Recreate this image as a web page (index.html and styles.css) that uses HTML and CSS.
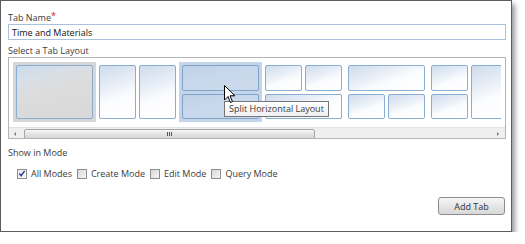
FILE: index.html
```html
<!DOCTYPE html>
<html lang="en">
<head>
    <meta charset="UTF-8">
    <title>Add Tab</title>
    <link rel="stylesheet" href="styles.css">
</head>
<body>
    <div class="dialog">
        <div class="field-label">Tab Name<span class="req">*</span></div>
        <input type="text" class="text-input" value="Time and Materials">

        <div class="field-label layout-label">Select a Tab Layout</div>
        <div class="layout-box">
            <div class="thumbs">
                <div class="option selected">
                    <div class="panel full"></div>
                </div>
                <div class="option cols">
                    <div class="panel"></div>
                    <div class="panel"></div>
                </div>
                <div class="option rows hover">
                    <div class="panel"></div>
                    <div class="panel"></div>
                </div>
                <div class="option grid top-split">
                    <div class="panel"></div>
                    <div class="panel"></div>
                    <div class="panel wide"></div>
                </div>
                <div class="option grid bottom-split">
                    <div class="panel wide"></div>
                    <div class="panel"></div>
                    <div class="panel"></div>
                </div>
                <div class="option grid left-split">
                    <div class="panel"></div>
                    <div class="panel tall"></div>
                    <div class="panel"></div>
                </div>
            </div>
            <div class="scrollbar">
                <span class="arrow left"></span>
                <div class="thumb"><span class="grip"></span></div>
                <span class="arrow right"></span>
            </div>

            <div class="tooltip">Split Horizontal Layout</div>
            <svg class="cursor" width="12" height="19" viewBox="0 0 12 19">
                <path d="M0.5 0.5 L0.5 15 L4 11.5 L6.5 17.5 L8.5 16.6 L6 10.8 L11 10.8 Z" fill="#fff" stroke="#000" stroke-width="1"/>
            </svg>
        </div>

        <div class="field-label mode-label">Show in Mode</div>
        <div class="modes">
            <label class="mode"><span class="box checked">
                <svg width="9" height="9" viewBox="0 0 9 9"><path d="M1.5 4.5 L3.5 7 L7.5 1.5" fill="none" stroke="#2a3f8f" stroke-width="1.6"/></svg>
            </span>All Modes</label>
            <label class="mode"><span class="box"></span>Create Mode</label>
            <label class="mode"><span class="box"></span>Edit Mode</label>
            <label class="mode"><span class="box"></span>Query Mode</label>
        </div>

        <div class="actions">
            <button type="button" class="add-btn">Add Tab</button>
        </div>
    </div>
</body>
</html>
```

FILE: styles.css
```css
body {
    margin: 0;
    background-color: #fff;
    font-family: "Open Sans", "Noto Sans", sans-serif;
    font-size: 9px;
    color: #3c3c3c;
}
.dialog {
    box-sizing: border-box;
    width: 512px;
    height: 232px;
    border: 1px solid #5c5c5c;
    padding: 10px 6px 0 7px;
    background-color: #fff;
    box-shadow: 3px 4px 5px rgba(0, 0, 0, 0.4);
}
.field-label {
    line-height: 13px;
    height: 13px;
}
.req {
    color: #d01010;
    vertical-align: top;
    font-size: 9px;
    line-height: 9px;
}
.text-input {
    display: block;
    box-sizing: border-box;
    width: 498px;
    height: 16px;
    margin: 0;
    padding: 0 3px;
    border: 1px solid #a9c1db;
    font-family: inherit;
    font-size: 9px;
    color: #111;
    outline: none;
}
.layout-label {
    margin-top: 4px;
}
.layout-box {
    position: relative;
    box-sizing: border-box;
    width: 498px;
    height: 82px;
    border: 1px solid #b4b4b4;
    overflow: hidden;
}
.thumbs {
    display: flex;
    padding: 4px 0 0 4px;
    height: 64px;
    box-sizing: border-box;
    width: 492px;
    overflow: hidden;
}
.option {
    flex: none;
    box-sizing: border-box;
    width: 83px;
    height: 60px;
    padding: 3px;
    display: grid;
    gap: 3px;
}
.option.selected {
    background-color: #d6d6d6;
}
.option.hover {
    background-color: #c4d5ea;
}
.option.cols {
    grid-template-columns: 1fr 1fr;
}
.option.rows {
    grid-template-rows: 1fr 1fr;
}
.option.grid {
    grid-template-columns: 1fr 1fr;
    grid-template-rows: 1fr 1fr;
}
.panel {
    border: 1px solid #8aadd2;
    border-radius: 2px;
    background: linear-gradient(160deg, #cfdcec 0%, #e6edf6 35%, #fbfcfe 60%, #fff 100%);
}
.panel.wide {
    grid-column: span 2;
}
.left-split .panel.tall {
    grid-row: span 2;
}
.option.selected .panel {
    background: linear-gradient(165deg, #cbdbec 0%, #d9dfe6 25%, #dcdcdc 45%, #d8d8d8 100%);
}
.option.hover .panel {
    border-color: #7fa3c9;
    background: linear-gradient(165deg, #bfd1e8 0%, #c8d7eb 40%, #ccdaec 100%);
}
.scrollbar {
    position: relative;
    display: flex;
    align-items: center;
    height: 11px;
    margin-top: 5px;
    background-color: #efefef;
    border-top: 1px solid #e2e2e2;
}
.arrow {
    width: 0;
    height: 0;
    border-top: 2px solid transparent;
    border-bottom: 2px solid transparent;
}
.arrow.left {
    margin-left: 5px;
    border-right: 2px solid #777;
}
.arrow.right {
    margin-left: auto;
    margin-right: 6px;
    border-left: 2px solid #777;
}
.thumb {
    display: flex;
    align-items: center;
    justify-content: center;
    box-sizing: border-box;
    width: 291px;
    height: 10px;
    margin-left: 8px;
    border: 1px solid #a6a6a6;
    border-radius: 2px;
    background: linear-gradient(#f7f7f7, #e4e4e4 50%, #d6d6d6);
}
.grip {
    width: 5px;
    height: 4px;
    background: repeating-linear-gradient(90deg, #555 0 1px, transparent 1px 2px);
}
.tooltip {
    position: absolute;
    left: 215px;
    top: 43px;
    box-sizing: border-box;
    height: 16px;
    padding: 0 4px;
    line-height: 14px;
    border: 1px solid #767676;
    background: linear-gradient(#ffffff, #eef0f3);
    color: #3c3c3c;
    white-space: nowrap;
}
.cursor {
    position: absolute;
    left: 215px;
    top: 27px;
}
.mode-label {
    margin-top: 7px;
}
.modes {
    display: flex;
    align-items: center;
    gap: 5px;
    margin-top: 8px;
    padding-left: 9px;
    height: 13px;
}
.mode {
    display: flex;
    align-items: center;
    gap: 4px;
}
.box {
    display: flex;
    align-items: center;
    justify-content: center;
    box-sizing: border-box;
    width: 10px;
    height: 10px;
    border: 1px solid #8e8e8e;
    background: linear-gradient(135deg, #d9d9d9, #f4f4f4);
}
.box.checked {
    background: linear-gradient(135deg, #e8e8e8, #fdfdfd);
}
.actions {
    display: flex;
    justify-content: flex-end;
    margin-top: 17px;
}
.add-btn {
    box-sizing: border-box;
    width: 67px;
    height: 18px;
    padding: 0;
    border: 1px solid #8c8c8c;
    border-radius: 3px;
    background: linear-gradient(#f6f6f6, #e6e6e6 50%, #d8d8d8);
    font-family: inherit;
    font-size: 9px;
    color: #333;
}
```
